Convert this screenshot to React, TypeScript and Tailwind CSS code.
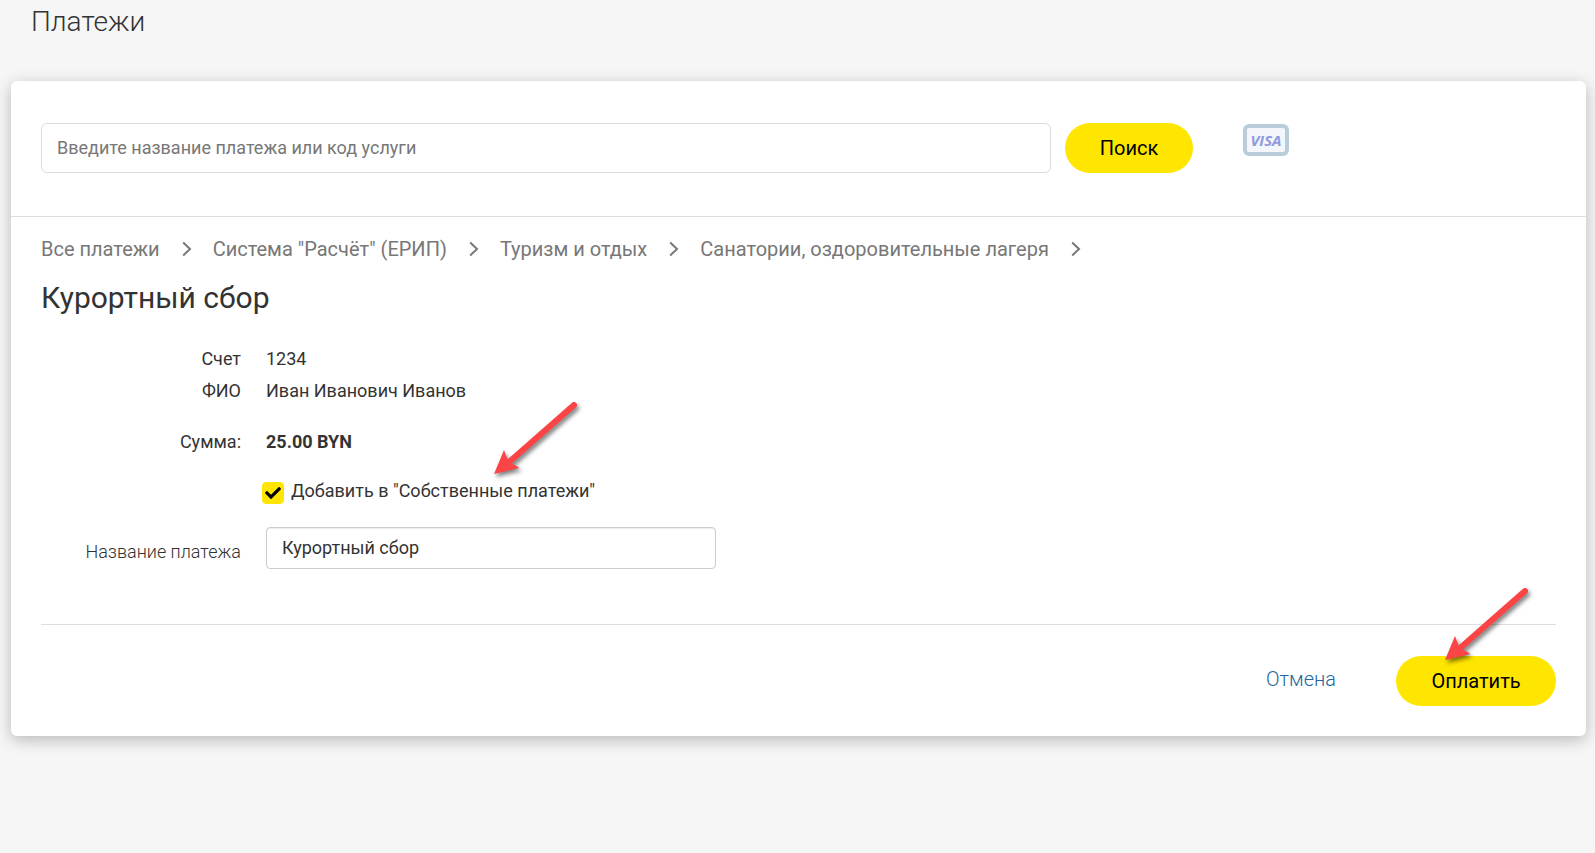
import { useState } from "react";
import { FaCheck } from "react-icons/fa";

const crumbs = [
  "Все платежи",
  'Система "Расчёт" (ЕРИП)',
  "Туризм и отдых",
  "Санатории, оздоровительные лагеря",
];

const details = [
  { label: "Счет", value: "1234" },
  { label: "ФИО", value: "Иван Иванович Иванов" },
];

function Chevron() {
  return (
    <svg width="10" height="16" viewBox="0 0 10 16" fill="none" stroke="#777" strokeWidth="2" aria-hidden="true">
      <path d="M1.2 1.6 L8 8 L1.2 14.4" />
    </svg>
  );
}

// red pointer, the tip is in the bottom left corner
function Arrow({ className }: { className: string }) {
  return (
    <svg
      width="96"
      height="84"
      viewBox="0 0 96 84"
      className={`pointer-events-none absolute drop-shadow-[2px_3px_2px_rgba(0,0,0,0.5)] ${className}`}
      aria-hidden="true"
    >
      <path d="M80 5 L14 63" stroke="#fb4446" strokeWidth="6" strokeLinecap="round" />
      <path d="M0 74 L10 50 L14.5 61.5 L25.5 68 Z" fill="#fb4446" />
    </svg>
  );
}

function VisaBadge() {
  return (
    <div className="flex h-8 w-[46px] items-center justify-center rounded-md border-4 border-[#b8cdd9] bg-[#f3f6fa]">
      <span className="font-['Open_Sans',sans-serif] text-[15px] leading-4 font-bold text-[#8f9ade] italic">VISA</span>
    </div>
  );
}

export default function App() {
  const [query, setQuery] = useState("");
  const [save, setSave] = useState(true);
  const [name, setName] = useState("Курортный сбор");

  return (
    <div className="min-h-screen bg-[#f6f6f6] pr-[9px] pb-8 pl-[11px] font-[Roboto,sans-serif] text-lg text-[#333]">
      <h1 className="px-5 pt-1 text-[28px] leading-9 font-light">Платежи</h1>

      <main className="mt-[41px] rounded-md bg-white shadow-[0_4px_16px_rgba(0,0,0,0.25)]">
        <form
          className="flex items-start border-b border-[#ddd] px-[30px] pt-[42px] pb-[43px]"
          onSubmit={(e) => e.preventDefault()}
        >
          <input
            type="text"
            aria-label="Поиск платежа"
            placeholder="Введите название платежа или код услуги"
            value={query}
            onChange={(e) => setQuery(e.target.value)}
            className="h-[50px] w-2/3 rounded-md border border-[#ddd] px-[15px] pb-0.5 placeholder:text-[#777]"
          />
          <button type="submit" className="ml-[14px] h-[50px] w-32 rounded-full bg-[#ffe600] text-xl text-black">
            Поиск
          </button>
          <div className="mt-px ml-[50px]">
            <VisaBadge />
          </div>
        </form>

        <div className="px-[30px] pt-[17px] pb-[30px]">
          <nav className="flex flex-wrap items-center text-xl leading-[30px] text-[#777]">
            {crumbs.map((c) => (
              <span key={c} className="flex items-center">
                <a href="#">{c}</a>
                <span className="mr-[21px] ml-[22px]">
                  <Chevron />
                </span>
              </span>
            ))}
          </nav>

          <h2 className="mt-[14px] text-[30px] leading-10">Курортный сбор</h2>

          <div className="mt-[25px] grid grid-cols-[200px_1fr] gap-x-[25px] leading-8">
            {details.map((d) => (
              <div key={d.label} className="contents">
                <span className="text-right">{d.label}</span>
                <span>{d.value}</span>
              </div>
            ))}
            <span className="mt-[19px] text-right">Сумма:</span>
            <span className="mt-[19px] font-bold">25.00 BYN</span>
          </div>

          <div className="mt-[17px] ml-[221px] flex">
            <label className="relative flex items-center gap-[7px] leading-8">
              <span className="relative mt-1 flex size-[22px] items-center justify-center">
                <input
                  type="checkbox"
                  checked={save}
                  onChange={(e) => setSave(e.target.checked)}
                  className="size-[22px] appearance-none rounded border border-[#ffe600] checked:bg-[#ffe600]"
                />
                {save && <FaCheck size={16} className="pointer-events-none absolute text-black" />}
              </span>
              Добавить в "Собственные платежи"
              <Arrow className="-top-[75px] left-[232px]" />
            </label>
          </div>

          <div className="mt-5 flex items-center gap-[25px]">
            <label htmlFor="payment-name" className="w-[200px] pt-2 text-right font-light">
              Название платежа
            </label>
            <input
              id="payment-name"
              type="text"
              value={name}
              onChange={(e) => setName(e.target.value)}
              className="h-[42px] w-[450px] rounded border border-[#ccc] px-[15px] pb-0.5 shadow-[inset_0_1px_1px_rgba(0,0,0,0.075)]"
            />
          </div>

          <div className="mt-[55px] flex items-center justify-end gap-[60px] border-t border-[#ddd] pt-[31px] text-xl">
            <a href="#" className="pb-1 font-light text-[#23659f]">
              Отмена
            </a>
            <div className="relative">
              <button type="button" className="h-[50px] w-40 rounded-full bg-[#ffe600] text-black">
                Оплатить
              </button>
              <Arrow className="-top-[70px] left-[49px]" />
            </div>
          </div>
        </div>
      </main>
    </div>
  );
}
